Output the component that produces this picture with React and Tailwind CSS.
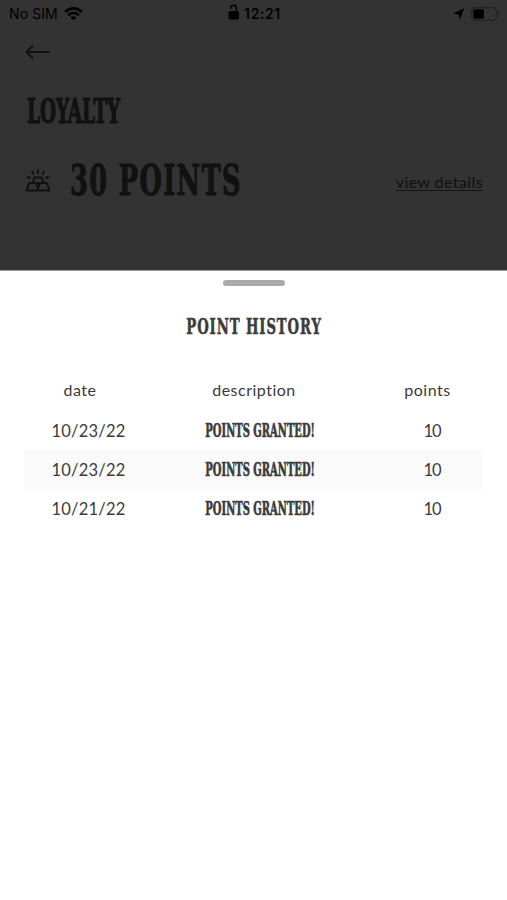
import clsx from 'clsx'

const history = [
  { date: '10/23/22', description: 'POINTS GRANTED!', points: 10 },
  { date: '10/23/22', description: 'POINTS GRANTED!', points: 10 },
  { date: '10/21/22', description: 'POINTS GRANTED!', points: 10 }
]

function Display({ as: Tag = 'span', className, children }) {
  return (
    <Tag
      className={clsx(
        "block w-max whitespace-nowrap font-['DejaVu_Serif_Condensed','DejaVu_Serif',serif] font-bold",
        className
      )}
    >
      {children}
    </Tag>
  )
}

function StatusBar() {
  return (
    <div className="grid h-[27px] grid-cols-3 items-center pr-[7px] pl-[9px] text-black font-['Inter',sans-serif]">
      <div className="flex items-center gap-[6px] text-[14px] tracking-[0.1px]">
        No SIM
        <svg width="19" height="14" viewBox="0 0 19 14" fill="none" stroke="currentColor" strokeWidth="2.6">
          <path d="M1.2 5C6 .2 13 .2 17.8 5" />
          <path d="M4.2 8.2c3.200-3.100 7.400-3.100 10.600 0" />
          <path d="M9.500 13.500 6.500 10.500q3-2.500 6 0z" fill="currentColor" stroke="none" />
        </svg>
      </div>
      <div className="flex items-center justify-center gap-[4px] text-[14px] font-semibold tracking-[0.6px]">
        <svg width="12" height="16" viewBox="0 0 12 16" fill="none" className="-mt-[3px]">
          <rect x="0.500" y="7" width="10.500" height="8.500" rx="1.500" fill="currentColor" />
          <path d="M3 5V4a2.700 2.700 0 0 1 5.400 0v3" stroke="currentColor" strokeWidth="1.500" />
        </svg>
        12:21
      </div>
      <div className="flex items-center justify-end gap-[6px]">
        <svg width="13" height="12" viewBox="0 0 12 12" fill="currentColor">
          <path d="M11.700 .3 7.500 11.700 6 6.500.300 5.500z" />
        </svg>
        <svg width="29" height="14" viewBox="0 0 29 14" fill="none">
          <rect x=".7" y=".7" width="24.600" height="12.600" rx="3.500" stroke="#222" strokeWidth="1.300" />
          <rect x="2.500" y="2.300" width="10.500" height="9.400" rx="1.500" fill="currentColor" />
          <path d="M26.700 4.200v5.600q3.500-2.800 0-5.600" fill="#222" />
        </svg>
      </div>
    </div>
  )
}

function GoldIcon() {
  return (
    <svg width="26" height="24" viewBox="0 0 26 24" fill="none" stroke="currentColor" strokeWidth="2" strokeLinejoin="round">
      <path d="M7.500 14 9.500 8.500h7l2 5.500M1.500 21.500 4.200 14h6.600l2.200 5 2.200-5h6.600l2.700 7.500zM13 19v2.500M10.800 14h4.400" />
      <path d="M13 1v3M7.300 2.800l1 1.900M18.700 2.800l-1 1.900M2.800 8l2 1M23.200 8l-2 1" strokeLinecap="round" />
    </svg>
  )
}

function Header() {
  return (
    <header className="h-[270px] bg-[#333] text-[#111]">
      <StatusBar />
      <div className="flex h-[49px] items-center pl-[25px]">
        <svg width="26" height="16" viewBox="0 0 26 16" fill="none" stroke="currentColor" strokeWidth="1.800" strokeLinecap="round" strokeLinejoin="round">
          <path d="M24 8H1.500M7.500 2l-6 6 6 6" />
        </svg>
      </div>
      <div className="flex h-[70px] items-center pl-[27px]">
        <Display
          as="h1"
          className="origin-left scale-x-[0.62] text-[33px] leading-none [-webkit-text-stroke:1.2px_#111]"
        >
          LOYALTY
        </Display>
      </div>
      <div className="flex h-[70px] items-center justify-between pr-[24px] pl-[25px]">
        <div className="flex items-center gap-[19px]">
          <GoldIcon />
          <div className="w-[172px]">
            <Display className="origin-left scale-x-[0.68] text-[42px] leading-none tracking-[2px] [-webkit-text-stroke:1px_#111]">
              30 POINTS
            </Display>
          </div>
        </div>
        <a className="mt-px border-b border-[#151515] font-['Lato',sans-serif] text-[16px] leading-[17px] tracking-[0.4px]">
          view details
        </a>
      </div>
    </header>
  )
}

function PointHistory() {
  return (
    <section className="flex-1 border-t border-[#999] bg-white px-6 pt-[9px] text-[#3b3b3b]">
      <div className="mx-auto h-[6px] w-[62px] rounded-full bg-[#aaa]" />
      <div className="mt-[24px] flex h-[32px] items-center justify-center pl-[2px]">
        <Display
          as="h2"
          className="scale-x-[0.67] text-[22px] leading-none tracking-[1.3px] [-webkit-text-stroke:0.5px_#3b3b3b]"
        >
          POINT HISTORY
        </Display>
      </div>
      <div className="mt-[28px] font-['Lato',sans-serif] text-[16.5px]">
        <div className="grid h-[41px] grid-cols-[112px_236px_1fr] items-center pb-[2px] text-center text-[16px] tracking-[0.5px]">
          <span>date</span>
          <span>description</span>
          <span>points</span>
        </div>
        {history.map((item, index) => (
          <div
            key={index}
            className={clsx(
              'grid h-[39px] grid-cols-[129px_215px_1fr] items-center text-center',
              index % 2 === 1 && 'bg-[#fafafa]'
            )}
          >
            <span className="pt-[2px] tracking-[0.2px]">{item.date}</span>
            <div className="flex justify-center">
              <Display className="scale-x-[0.615] text-[18px] leading-none [-webkit-text-stroke:0.6px_#3b3b3b]">
                {item.description}
              </Display>
            </div>
            <span className="pt-[2px] pl-[13px] tracking-[-1px]">{item.points}</span>
          </div>
        ))}
      </div>
    </section>
  )
}

export default function App() {
  return (
    <main className="flex h-[900px] w-full flex-col overflow-hidden">
      <Header />
      <PointHistory />
    </main>
  )
}
